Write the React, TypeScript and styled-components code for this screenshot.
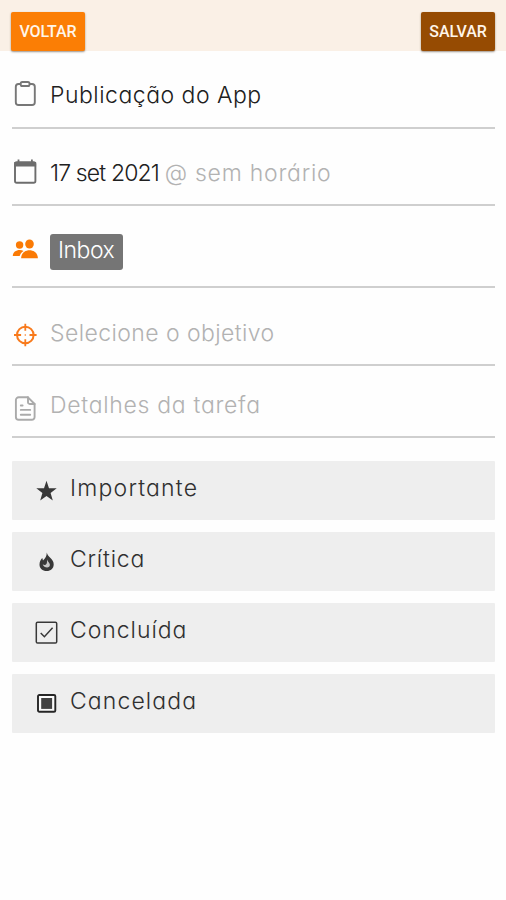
import React from "react";
import styled, { createGlobalStyle } from "styled-components";

const GlobalStyle = createGlobalStyle`
  * { box-sizing: border-box; }
  body { margin: 0; background: #fff; font-family: Inter, "Open Sans", sans-serif; }
`;

const Screen = styled.main`
  width: 506px;
  height: 900px;
  overflow: hidden;
  background: #fefefe;
`;

const TopBar = styled.header`
  height: 51px;
  padding: 12px 11px 0 11px;
  display: flex;
  justify-content: space-between;
  background: #faf0e6;
`;

const BarButton = styled.button<{ $bg: string }>`
  width: 74px;
  height: 39px;
  padding: 0;
  border: 0;
  border-radius: 2px;
  background: ${(p) => p.$bg};
  color: #fff5ea;
  font: 500 16px Roboto, sans-serif;
  letter-spacing: -0.1px;
  box-shadow: 0 1px 2px rgba(60, 40, 20, 0.5);
`;

const Fields = styled.section`
  padding: 0 11px 0 12px;
`;

const Field = styled.div<{ $height: number; $top: number }>`
  height: ${(p) => p.$height}px;
  padding-top: ${(p) => p.$top}px;
  display: flex;
  align-items: flex-start;
  border-bottom: 2px solid #cfcfcf;
`;

const IconSlot = styled.span<{ $shift: number; $width?: number; $color: string }>`
  flex: none;
  width: ${(p) => p.$width ?? 38}px;
  margin-top: ${(p) => p.$shift}px;
  color: ${(p) => p.$color};
  svg { display: block; }
`;

const Label = styled.span<{ $color?: string; $spacing?: number }>`
  font-size: 23px;
  font-weight: 300;
  line-height: 30px;
  white-space: pre;
  font-feature-settings: "cv11" 1;
  color: ${(p) => p.$color ?? "#202020"};
  letter-spacing: ${(p) => p.$spacing ?? 0}px;
`;

const Tag = styled.span`
  width: 73px;
  height: 36px;
  padding: 1px 0 0 8px;
  border-radius: 3px;
  background: #757575;
`;

const Options = styled.section`
  padding: 23px 11px 0 12px;
  display: grid;
  gap: 12px;
`;

const Option = styled.div`
  height: 59px;
  padding: 12px 0 0 22px;
  display: flex;
  align-items: flex-start;
  border-radius: 1px;
  background: #eeeeee;
`;

const ClipboardIcon = () => (
  <svg width="26" height="28" viewBox="0 0 26 28" fill="none" stroke="currentColor" strokeWidth="1.9">
    <path d="M9 4H6.5A2.8 2.8 0 0 0 3.800 6.800V22.200A2.800 2.800 0 0 0 6.600 25H20A2.800 2.800 0 0 0 22.800 22.200V6.800A2.800 2.800 0 0 0 20 4H17.500" />
    <rect x="8.700" y="2" width="8.800" height="4" rx="1.600" />
  </svg>
);

const CalendarIcon = () => (
  <svg width="26" height="28" viewBox="0 0 26 28">
    <rect x="3" y="4.200" width="20.400" height="20.600" rx="1.800" fill="none" stroke="currentColor" strokeWidth="1.900" />
    <path d="M2.300 4h21.800v4.500H2.300zM5.600 1.500h1.800v4H5.600zM19 1.500h1.800v4h-1.800z" fill="currentColor" />
  </svg>
);

const PeopleIcon = () => (
  <svg width="28" height="24" viewBox="0 0 28 24" fill="currentColor">
    <circle cx="7.600" cy="7" r="3.700" />
    <ellipse cx="17.500" cy="6" rx="4.300" ry="4.600" />
    <path d="M.8 18c0-3.700 3.200-6 7-6 1.400 0 2.700.3 3.800.9-2.100 1.300-3.500 3.200-3.900 5.100z" />
    <path d="M9.100 20.300c0-5 3.900-8 8.400-8s8.400 3 8.400 8z" />
  </svg>
);

const TargetIcon = () => (
  <svg width="26" height="26" viewBox="0 0 26 26" fill="none" stroke="currentColor">
    <circle cx="13.300" cy="13" r="8.300" strokeWidth="2" />
    <path d="M13.300 1.700v7.100M13.300 17.200v7.100M2 13h7.100M17.500 13h7.100" strokeWidth="1.800" />
    <circle cx="13.300" cy="13" r=".8" fill="currentColor" stroke="none" />
  </svg>
);

const DocumentIcon = () => (
  <svg width="26" height="28" viewBox="0 0 26 28" fill="none" stroke="currentColor" strokeWidth="1.900" strokeLinecap="round" strokeLinejoin="round">
    <path d="M16 2.300H6.700A2.800 2.800 0 0 0 3.900 5.100V22a2.800 2.800 0 0 0 2.800 2.800H19.800A2.800 2.800 0 0 0 22.600 22V9z" />
    <path d="M16 2.300V7.200A1.700 1.700 0 0 0 17.700 9H22.600M8.800 10.500h1.800M8.800 14.900h9.400M8.800 19.700h9.400" />
  </svg>
);

const StarIcon = () => (
  <svg width="25" height="24" viewBox="0 0 25 24" fill="currentColor">
    <path d="M12.500 1.800 15 9.200 22.700 9.300 16.600 13.900 18.800 21.500 12.500 17 6.200 21.500 8.400 13.900 2.300 9.300 10 9.200z" />
  </svg>
);

const FlameIcon = () => (
  <svg width="25" height="24" viewBox="0 0 25 24">
    <path d="M12.800 1.500C13.400 6 19.700 7.800 19.700 13.200C19.700 17.500 16.700 20 12.700 20C8.500 20 5.500 17.500 5.500 13.500C5.500 10.300 7.100 8.200 8.300 7.100L9 9.500C11.500 7.300 12.700 5.200 12.800 1.500z" fill="currentColor" />
    <path d="M13 8.500c.6 2.300 2.900 3.200 2.900 5.300 0 1.700-1.200 2.700-2.800 2.700-1.900 0-3.700-1-4.400-3.200 1.400 1.100 3 .9 3.700-.2.700-1.100.6-2.600.6-4.600z" fill="#c8c8c8" />
  </svg>
);

const CheckIcon = () => (
  <svg width="25" height="25" viewBox="0 0 25 25" fill="none" stroke="currentColor">
    <rect x="2.300" y="2.300" width="20.400" height="20.800" rx="1.300" strokeWidth="1.500" />
    <path d="m6.700 13 3.700 3.700 8.200-8.900" strokeWidth="1.500" />
  </svg>
);

const CancelIcon = () => (
  <svg width="25" height="24" viewBox="0 0 25 24">
    <rect x="4" y="3" width="17.300" height="16.800" rx="1.300" fill="#fafafa" stroke="#252525" strokeWidth="1.900" />
    <rect x="7.200" y="6" width="10.900" height="10.900" fill="#414141" />
  </svg>
);

const options = [
  { label: "Importante", icon: <StarIcon />, shift: 6, spacing: 1.2 },
  { label: "Crítica", icon: <FlameIcon />, shift: 7, spacing: 0.8 },
  { label: "Concluída", icon: <CheckIcon />, shift: 5, spacing: 0.95 },
  { label: "Cancelada", icon: <CancelIcon />, shift: 6, spacing: 1.1 },
];

export default function App() {
  return (
    <>
      <GlobalStyle />
      <Screen>
        <TopBar>
          <BarButton $bg="#fb7e05">VOLTAR</BarButton>
          <BarButton $bg="#964b02">SALVAR</BarButton>
        </TopBar>
        <Fields>
          <Field $height={78} $top={29}>
            <IconSlot $shift={0} $color="#777"><ClipboardIcon /></IconSlot>
            <Label $spacing={0.5}>Publicação do App</Label>
          </Field>
          <Field $height={77} $top={29}>
            <IconSlot $shift={0} $color="#6d6d6d"><CalendarIcon /></IconSlot>
            <Label $spacing={-0.85}>17 set 2021 </Label>
            <Label $color="#b2b2b2" $spacing={0.75}>@ sem horário</Label>
          </Field>
          <Field $height={82} $top={28}>
            <IconSlot $shift={4} $color="#fa7a05"><PeopleIcon /></IconSlot>
            <Tag><Label $color="#fff" $spacing={-0.5}>Inbox</Label></Tag>
          </Field>
          <Field $height={78} $top={30}>
            <IconSlot $shift={4} $color="#f87a1c"><TargetIcon /></IconSlot>
            <Label $color="#b2b2b2" $spacing={0.42}>Selecione o objetivo</Label>
          </Field>
          <Field $height={72} $top={24}>
            <IconSlot $shift={5} $color="#aaa"><DocumentIcon /></IconSlot>
            <Label $color="#b2b2b2" $spacing={0.7}>Detalhes da tarefa</Label>
          </Field>
        </Fields>
        <Options>
          {options.map((o) => (
            <Option key={o.label}>
              <IconSlot $shift={o.shift} $width={36} $color="#383838">{o.icon}</IconSlot>
              <Label $spacing={o.spacing} $color="#303030">{o.label}</Label>
            </Option>
          ))}
        </Options>
      </Screen>
    </>
  );
}
